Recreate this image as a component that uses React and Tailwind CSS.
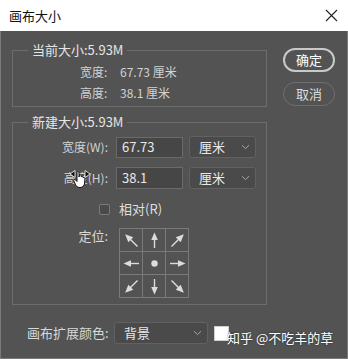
const ARROWS = [-45, 0, 45, -90, null, 90, -135, 180, 135];

function Arrow({ angle }) {
    if (angle === null) {
        return (
            <svg width="21" height="21" viewBox="0 0 21 21">
                <circle cx="10.5" cy="10.5" r="3.2" fill="#dcdcdc" />
            </svg>
        );
    }
    const long = angle % 90 !== 0;
    return (
        <svg width="21" height="21" viewBox="0 0 21 21">
            <g transform={`rotate(${angle} 10.5 10.5)`}>
                <line
                    x1="10.5"
                    y1={long ? 19 : 18}
                    x2="10.5"
                    y2="8"
                    stroke="#dcdcdc"
                    strokeWidth="1.4"
                />
                <polygon
                    points={long ? "10.5,1.5 7,9.5 14,9.5" : "10.5,2.5 7.2,10 13.8,10"}
                    fill="#dcdcdc"
                />
            </g>
        </svg>
    );
}

function Select({ value, width }) {
    return (
        <div
            className={`${width} h-[22px] flex items-center justify-between bg-[#4a4a4a] border border-[#616161] rounded-[3px] pl-[9px] pr-[5px]`}
        >
            <span className="text-[13px] leading-[16px] text-[#e8e8e8]">
                {value}
            </span>
            <svg width="9" height="6" viewBox="0 0 9 6">
                <path
                    d="M1 1.2 L4.5 4.6 L8 1.2"
                    fill="none"
                    stroke="#a8a8a8"
                    strokeWidth="1"
                />
            </svg>
        </div>
    );
}

function HandCursor() {
    return (
        <svg
            width="22"
            height="22"
            viewBox="0 0 22 22"
            className="absolute left-[69px] top-[167px]"
        >
            <polygon points="1,7 6,3.5 6,10.5" fill="#111" stroke="#fff" strokeWidth="0.8" />
            <polygon points="21,7 16,3.5 16,10.5" fill="#111" stroke="#fff" strokeWidth="0.8" />
            <path
                d="M8 5.5 C8 4.3 10 4.3 10 5.5 L10 10 L10.5 8.5 C10.8 7.5 12.5 7.7 12.3 9 L12.3 10 C12.6 9 14.3 9.2 14.1 10.4 L14.1 11 C14.5 10.2 16 10.4 15.9 11.6 L15.6 16 C15.4 18.5 14 20.5 11 20.5 C8.5 20.5 7.5 19.5 6.5 17.5 L4.8 13.8 C4.3 12.7 5.8 11.9 6.6 12.9 L8 14.5 Z"
                fill="#fff"
                stroke="#111"
                strokeWidth="1"
                strokeLinejoin="round"
            />
        </svg>
    );
}

export default function App() {
    return (
        <div className="relative w-[348px] h-[359px] font-['Noto_Sans_CJK_SC','Microsoft_YaHei',sans-serif] select-none">
            <div className="h-[31px] bg-white flex items-center justify-between pl-[9px] pr-[10px]">
                <span className="text-[13px] leading-[16px] text-[#111]">
                    画布大小
                </span>
                <svg width="13" height="13" viewBox="0 0 13 13">
                    <path
                        d="M1 1 L12 12 M12 1 L1 12"
                        stroke="#222"
                        strokeWidth="1.1"
                    />
                </svg>
            </div>

            <div className="h-[328px] bg-[#535353] border-x border-b border-[#7a7a7a] pt-[11px] pl-[11px]">
                <div className="flex items-start">
                    <div className="w-[255px]">
                        <fieldset className="border border-[#6d6d6d] pb-[3px]">
                            <legend className="ml-[15px] px-[4px] text-[13px] leading-[16px] text-[#e6e6e6]">
                                当前大小:5.93M
                            </legend>
                            <div className="pt-[3px] pl-[67px] text-[12px] text-[#d2d2d2]">
                                <div className="h-[21px] flex items-center">
                                    <span className="w-[40px]">宽度:</span>
                                    <span>67.73 厘米</span>
                                </div>
                                <div className="h-[21px] flex items-center">
                                    <span className="w-[40px]">高度:</span>
                                    <span>38.1 厘米</span>
                                </div>
                            </div>
                        </fieldset>

                        <fieldset className="mt-[7px] border border-[#6d6d6d] pb-[6px]">
                            <legend className="ml-[15px] px-[4px] text-[13px] leading-[16px] text-[#e6e6e6]">
                                新建大小:5.93M
                            </legend>
                            <div className="pt-[6px] flex flex-col text-[12px] text-[#d2d2d2]">
                                <div className="flex items-center">
                                    <span className="w-[95px] text-right leading-[16px]">
                                        宽度(W):
                                    </span>
                                    <div className="ml-[8px] w-[67px] h-[21px] bg-[#464646] border border-[#6a6a6a] flex items-center pl-[5px] text-[13px] text-[#e8e8e8]">
                                        67.73
                                    </div>
                                    <div className="ml-[6px]">
                                        <Select value="厘米" width="w-[67px]" />
                                    </div>
                                </div>
                                <div className="mt-[9px] flex items-center">
                                    <span className="w-[95px] text-right leading-[16px]">
                                        高度(H):
                                    </span>
                                    <div className="ml-[8px] w-[67px] h-[22px] bg-[#464646] border border-[#6a6a6a] flex items-center pl-[5px] text-[13px] text-[#e8e8e8]">
                                        38.1
                                    </div>
                                    <div className="ml-[6px]">
                                        <Select value="厘米" width="w-[67px]" />
                                    </div>
                                </div>
                                <div className="mt-[12px] ml-[86px] flex items-center">
                                    <div className="w-[11px] h-[11px] border border-[#7a7a7a] bg-[#4a4a4a] rounded-[2px]" />
                                    <span className="ml-[9px] text-[13px] leading-[16px] text-[#dedede]">
                                        相对(R)
                                    </span>
                                </div>
                                <div className="mt-[11px] flex items-start">
                                    <span className="w-[95px] text-right text-[13px] leading-[16px] text-[#d8d8d8]">
                                        定位:
                                    </span>
                                    <div className="ml-[11px] grid grid-cols-3 border-l border-t border-[#7a7a7a]">
                                        {ARROWS.map((angle, i) => (
                                            <div
                                                key={i}
                                                className="w-[23px] h-[23px] border-r border-b border-[#7a7a7a] flex items-center justify-center"
                                            >
                                                <Arrow angle={angle} />
                                            </div>
                                        ))}
                                    </div>
                                </div>
                            </div>
                        </fieldset>

                        <div className="mt-[17px] flex items-center">
                            <span className="ml-[15px] w-[87px] text-[13px] leading-[16px] text-[#d8d8d8]">
                                画布扩展颜色:
                            </span>
                            <Select value="背景" width="w-[94px]" />
                            <div className="ml-[6px] w-[15px] h-[15px] bg-white border border-[#cfcfcf]" />
                        </div>
                    </div>

                    <div className="ml-[16px] pt-[6px] flex flex-col">
                        <div className="w-[52px] h-[24px] rounded-full border-2 border-[#c9c9c9] flex items-center justify-center text-[13px] text-white">
                            确定
                        </div>
                        <div className="mt-[10px] w-[52px] h-[24px] rounded-full border border-[#6f6f6f] flex items-center justify-center text-[13px] text-[#dcdcdc]">
                            取消
                        </div>
                    </div>
                </div>
            </div>

            <HandCursor />

            <span className="absolute left-[227px] top-[329px] text-[13px] leading-[18px] text-white [text-shadow:0_0_2px_rgba(0,0,0,0.6)]">
                知乎 @不吃羊的草
            </span>
        </div>
    );
}
